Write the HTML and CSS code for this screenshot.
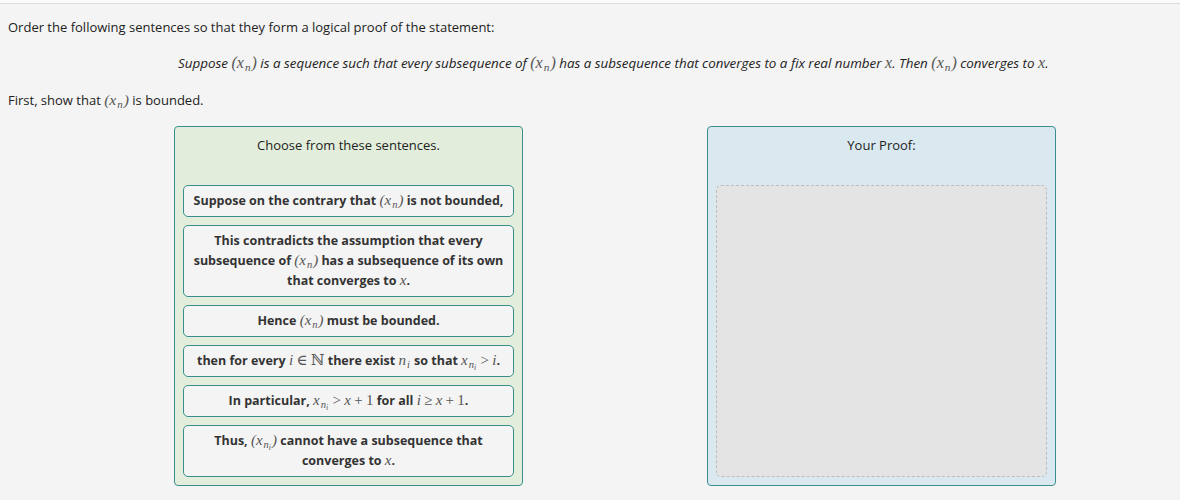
FILE: index.html
```html
<!DOCTYPE html>
<html lang="en">
<head>
  <meta charset="UTF-8" />
  <title>Proof ordering</title>
  <link rel="stylesheet" href="styles.css">
</head>
<body>
  <div class="topbar"></div>

  <div class="content">
    <p class="intro">Order the following sentences so that they form a logical proof of the statement:</p>

    <p class="statement">Suppose <span class="m">(x<sub>n</sub>)</span> is a sequence such that every subsequence of <span class="m">(x<sub>n</sub>)</span> has a subsequence that converges to a fix real number <span class="m">x</span>. Then <span class="m">(x<sub>n</sub>)</span> converges to <span class="m">x</span>.</p>

    <p class="step">First, show that <span class="m">(x<sub>n</sub>)</span> is bounded.</p>

    <div class="boards">
      <div class="panel choices">
        <div class="panel-title">Choose from these sentences.</div>
        <div class="list">
          <div class="item">Suppose on the contrary that <span class="m">(x<sub>n</sub>)</span> is not bounded,</div>
          <div class="item">This contradicts the assumption that every subsequence of <span class="m">(x<sub>n</sub>)</span> has a subsequence of its own that converges to <span class="m">x</span>.</div>
          <div class="item">Hence <span class="m">(x<sub>n</sub>)</span> must be bounded.</div>
          <div class="item">then for every <span class="m">i<span class="op">∈</span><span class="up">ℕ</span></span> there exist <span class="m">n<sub>i</sub></span> so that <span class="m">x<sub>n<small>i</small></sub><span class="op">&gt;</span>i</span>.</div>
          <div class="item">In particular, <span class="m">x<sub>n<small>i</small></sub><span class="op">&gt;</span>x<span class="op">+</span><span class="up">1</span></span> for all <span class="m">i<span class="op">≥</span>x<span class="op">+</span><span class="up">1</span></span>.</div>
          <div class="item">Thus, <span class="m">(x<sub>n<small>i</small></sub>)</span> cannot have a subsequence that converges to <span class="m">x</span>.</div>
        </div>
      </div>

      <div class="panel proof">
        <div class="panel-title">Your Proof:</div>
        <div class="dropzone"></div>
      </div>
    </div>
  </div>
</body>
</html>
```

FILE: styles.css
```css
:root {
  --fundo: #f4f4f4;
  --borda: #3b8e8e;
  --texto: #222;
  --verde: #e2eedb;
  --azul: #dae9f0;
}

body {
  margin: 0;
  background-color: var(--fundo);
  font-family: 'Open Sans', 'Noto Sans', sans-serif;
  font-size: 13px;
  color: var(--texto);
}

.topbar {
  height: 3px;
  background-color: #fbfbfb;
  border-bottom: 1px solid #dcdcdc;
}

.content {
  padding: 0 8px;
}

.content p {
  margin: 0;
  line-height: 20px;
}

.intro {
  padding-top: 13px;
}

.statement {
  margin-top: 16px !important;
  padding-left: 170px;
  font-size: 13.4px;
  font-style: italic;
}

.step {
  margin-top: 17px !important;
}

/* notação matemática */
.m {
  font-family: 'Liberation Serif', 'DejaVu Serif', serif;
  font-style: italic;
  font-weight: normal;
  font-size: 1.2em;
  line-height: 1;
  color: #555;
}

.m .up {
  font-style: normal;
}

.m .op {
  font-style: normal;
  margin: 0 0.22em;
}

.m sub {
  font-size: 0.7em;
  vertical-align: -0.3em;
  line-height: 0;
  margin: 0 1px;
}

.m sub small {
  font-size: 0.75em;
  vertical-align: -0.25em;
  line-height: 0;
}

.boards {
  display: flex;
  gap: 184px;
  margin-top: 16px;
  margin-left: 166px;
}

.panel {
  width: 349px;
  box-sizing: border-box;
  border: 1px solid var(--borda);
  border-radius: 4px;
  padding: 0 8px 8px;
  display: flex;
  flex-direction: column;
}

.choices {
  background-color: var(--verde);
}

.proof {
  background-color: var(--azul);
}

.panel-title {
  text-align: center;
  padding-top: 8px;
  line-height: 20px;
  margin-bottom: 30px;
}

.list {
  display: flex;
  flex-direction: column;
  gap: 8px;
}

.item {
  background-color: var(--fundo);
  border: 1px solid var(--borda);
  border-radius: 5px;
  padding: 5px 6px;
  font-size: 12.5px;
  line-height: 20px;
  font-weight: bold;
  color: #333;
  text-align: center;
}

.dropzone {
  flex: 1;
  background-color: #e4e4e4;
  border: 1px dashed #bdbdbd;
  border-radius: 5px;
}
```
